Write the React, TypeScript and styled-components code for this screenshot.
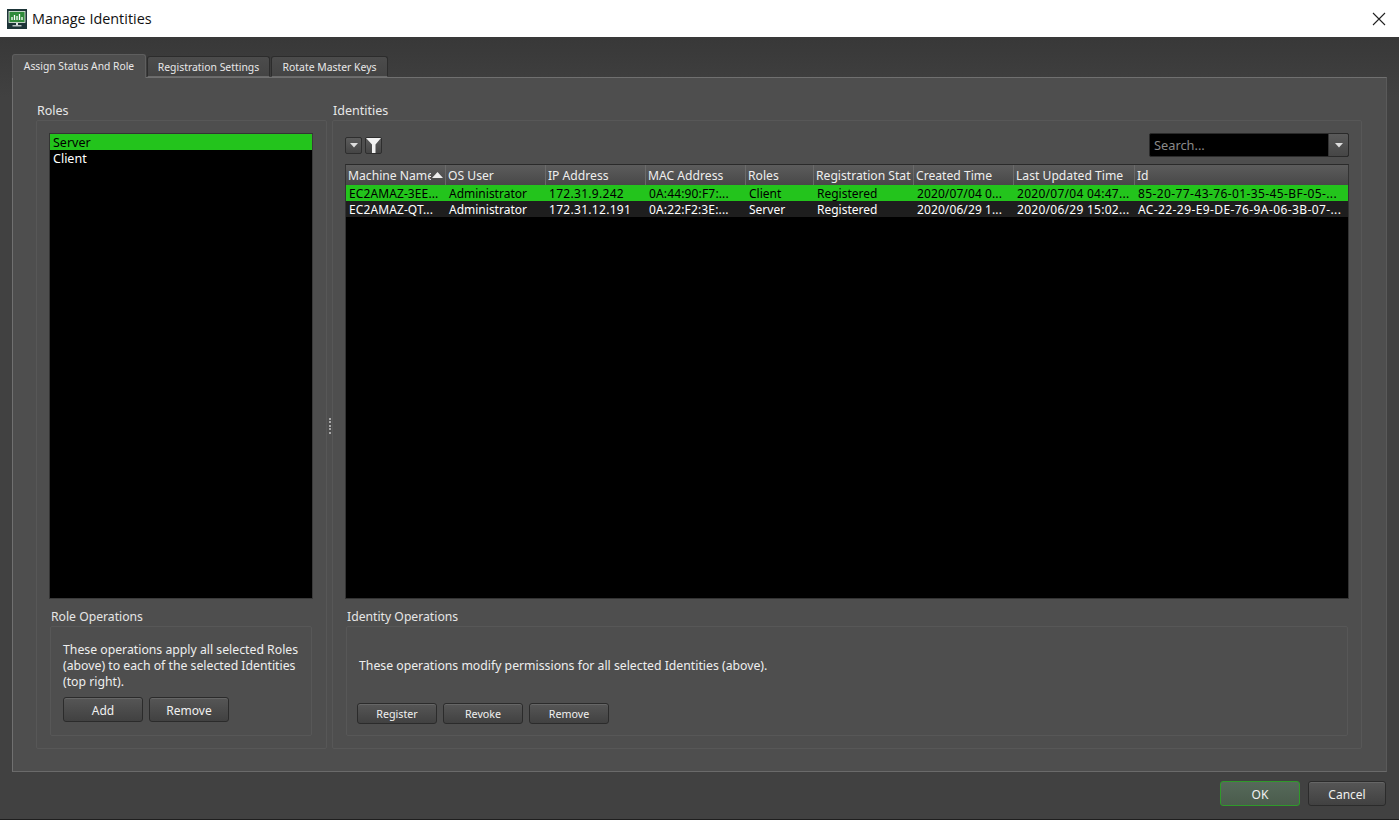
import React from "react";
import styled, { createGlobalStyle } from "styled-components";

const Global = createGlobalStyle`
  html, body { margin: 0; padding: 0; background: #404040; overflow: hidden; }
  * { box-sizing: border-box; }
  body { font-family: "Noto Sans", "Open Sans", sans-serif; font-size: 12.5px; color: #eee; }
`;

const Window = styled.div`
  width: 1399px; height: 820px; display: flex; flex-direction: column;
`;
const TitleBar = styled.header`
  height: 37px; flex: none; background: #fff; display: flex; align-items: center; padding: 0 13px 0 7px; color: #111;
`;
const TitleText = styled.span`
  font-size: 14.4px; margin-left: 5px; flex: 1; font-family: "Open Sans", sans-serif;
`;
const CloseButton = styled.button`
  width: 14px; height: 14px; padding: 0; border: 0; background: none; display: flex;
`;
const Body = styled.div`
  flex: 1; display: flex; flex-direction: column; padding: 17px 12px 0; min-height: 0;
  background: linear-gradient(#383838, #414141 60px, #414141);
  border-bottom: 1px solid #1e1e1e;
`;
const TabRow = styled.div`
  display: flex; align-items: flex-end; height: 23px; flex: none; position: relative; z-index: 1; gap: 1px;
`;
const Tab = styled.div<{ $active?: boolean; $w: number }>`
  width: ${p => p.$w}px;
  height: ${p => (p.$active ? 24 : 21)}px;
  margin-bottom: ${p => (p.$active ? -1 : 0)}px;
  padding-bottom: ${p => (p.$active ? 2 : 0)}px;
  font-size: ${p => (p.$active ? "10.3px" : "10.4px")};
  display: flex; align-items: center; justify-content: center;
  border: 1px solid ${p => (p.$active ? "#5e5e5e" : "#2c2c2c")};
  border-bottom: ${p => (p.$active ? "0" : "1px solid #6a6a6a")};
  border-radius: 3px 3px 0 0;
  background: ${p => (p.$active ? "#4e4e4e" : "linear-gradient(#4c4c4c, #444)")};
  color: #e8e8e8;
`;
const Pane = styled.div`
  width: 1375px; height: 695px; flex: none; background: #4e4e4e;
  border: 1px solid #707070; border-right-color: #5a5a5a; border-bottom-color: #6a6a6a;
  padding: 24px 24px 22px 23px; display: flex;
`;
const LeftColumn = styled.section`
  width: 291px; flex: none; display: flex; flex-direction: column;
`;
const RightColumn = styled.section`
  flex: 1; min-width: 0; display: flex; flex-direction: column;
`;
const Splitter = styled.div`
  width: 5px; flex: none; display: flex; flex-direction: column; align-items: center; justify-content: center; gap: 1.5px;
`;
const SplitDot = styled.i`
  width: 2px; height: 2px; background: #a8a8a8; display: block;
`;
const GroupLabel = styled.div`
  height: 18px; flex: none; line-height: 18px; padding-left: 1px; color: #e6e6e6;
`;
const GroupBox = styled.div<{ $left?: boolean }>`
  flex: 1; min-height: 0; border: 1px solid #575757; border-radius: 2px;
  padding: ${p => (p.$left ? "12px 13px 12px 12px" : "12px")};
  display: flex; flex-direction: column;
`;
const RoleList = styled.div`
  flex: 1; min-height: 0; background: #000; border: 1px solid #333; border-color: #333 #3a3a3a #3a3a3a #333;
`;
const RoleItem = styled.div<{ $selected?: boolean }>`
  height: 16px; line-height: 18px; padding-left: 3px; overflow: hidden;
  background: ${p => (p.$selected ? "#23c41c" : "transparent")};
  color: ${p => (p.$selected ? "#000" : "#fff")};
`;
const SubLabel = styled.div`
  height: 18px; margin-top: 9px; line-height: 18px; padding-left: 2px; flex: none; color: #e6e6e6; font-size: 12.2px;
`;
const SubBox = styled.div<{ $narrow?: boolean }>`
  height: 110px; flex: none; margin: 0 1px; border: 1px solid #575757; border-radius: 2px;
  padding: ${p => (p.$narrow ? "15px 12px 0" : "31px 10px 0")};
  display: flex; flex-direction: column;
`;
const Description = styled.p`
  margin: 0; line-height: 16px; color: #eee; font-size: 12.25px;
`;
const WideDescription = styled(Description)`
  padding-left: 2px; flex: 1;
`;
const ButtonRow = styled.div`
  display: flex; gap: 6px;
`;
const ActionButton = styled.button<{ $small?: boolean; $primary?: boolean; $w?: number }>`
  width: ${p => p.$w ?? 80}px;
  height: ${p => (p.$small ? 21 : 25)}px;
  margin: ${p => (p.$small ? "0 0 11px" : "0")};
  padding: 1px 0 0;
  font-family: inherit;
  font-size: ${p => (p.$small ? "10.7px" : "12px")};
  color: #f0f0f0;
  border-radius: 3px;
  border: 1px solid ${p => (p.$primary ? "#2f9a2a" : "#2b2b2b")};
  background: ${p => (p.$primary ? "linear-gradient(#56695a, #4a5c4c)" : "linear-gradient(#565656, #414141)")};
  box-shadow: inset 0 1px 0 ${p => (p.$primary ? "transparent" : "#666")};
`;
const Spacer = styled.div`
  height: 7px; flex: none;
`;
const Toolbar = styled.div`
  height: 25px; flex: none; display: flex; align-items: flex-start; margin-bottom: 6px;
`;
const IconButton = styled.button`
  width: 17px; height: 17px; margin: 4px 3px 0 0; padding: 0; display: flex; align-items: center; justify-content: center;
  border: 1px solid #2e2e2e; border-radius: 2px; background: linear-gradient(#5c5c5c, #454545);
`;
const SearchCombo = styled.div`
  margin-left: auto; width: 200px; height: 24px; display: flex; border: 1px solid #2a2a2a; border-radius: 2px; background: #000; overflow: hidden;
`;
const SearchInput = styled.div`
  flex: 1; color: #8a8a8a; padding-left: 4px; line-height: 22px; font-size: 12.8px;
`;
const SearchArrow = styled.div`
  width: 20px; display: flex; align-items: center; justify-content: center; background: linear-gradient(#5a5a5a, #464646); border-left: 1px solid #333;
`;
const Table = styled.div`
  flex: 1; min-height: 0; background: #000; border: 1px solid #333; border-top-color: #2a2a2a; overflow: hidden;
`;
const COLUMNS = "100px 100px 100px 100px 68px 100px 100px 121px 1fr";
const HeaderRow = styled.div`
  display: grid; grid-template-columns: ${COLUMNS}; height: 20px;
  background: linear-gradient(#5c5c5c, #484848);
`;
const HeaderCell = styled.div`
  padding: 0 0 0 2px; line-height: 21px; overflow: hidden; white-space: nowrap; position: relative;
  border-right: 1px solid #6a6a6a; color: #eee; font-size: 12.15px;
  &:last-child { border-right: 0; }
`;
const SortedLabel = styled.span`
  display: block; width: 83px; overflow: hidden;
`;
const SortArrow = styled.svg`
  position: absolute; right: 2px; top: 7px;
`;
const DataRow = styled.div<{ $selected?: boolean }>`
  display: grid; grid-template-columns: ${COLUMNS}; height: 16px;
  background: ${p => (p.$selected ? "#23c41c" : "#1e1e1e")};
  color: ${p => (p.$selected ? "#000" : "#fff")};
`;
const DataCell = styled.div<{ $spacing: number }>`
  padding-left: 3px; line-height: 18px; overflow: hidden; white-space: nowrap; font-size: 12px;
  letter-spacing: ${p => p.$spacing}px;
`;
const FooterRow = styled.div`
  display: flex; justify-content: flex-end; gap: 8px; margin-top: 9px; padding-right: 1px;
`;

const heads = ["OS User", "IP Address", "MAC Address", "Roles", "Registration Stat", "Created Time", "Last Updated Time", "Id"];
const cellSpacing = [0.1, 0, 0.3, 0.15, 0, 0, 0.1, 0.27, 0.4];
const rows = [
  ["EC2AMAZ-3EE...", "Administrator", "172.31.9.242", "0A:44:90:F7:...", "Client", "Registered", "2020/07/04 0...", "2020/07/04 04:47...", "85-20-77-43-76-01-35-45-BF-05-..."],
  ["EC2AMAZ-QT...", "Administrator", "172.31.12.191", "0A:22:F2:3E:...", "Server", "Registered", "2020/06/29 1...", "2020/06/29 15:02...", "AC-22-29-E9-DE-76-9A-06-3B-07-..."],
];

const Chevron = () => (
  <svg width="8" height="5" viewBox="0 0 8 5"><path d="M0 0h8L4 4.5z" fill="#dedede" /></svg>
);

const AppIcon = () => (
  <svg width="20" height="20" viewBox="0 0 20 20">
    <rect width="20" height="20" fill="#1d3538" />
    <rect x="2" y="2.5" width="16" height="11" fill="#2f8a3a" stroke="#e8f0e8" strokeWidth="0.8" />
    <path d="M5 11V8M7.5 11V6M10 11V7M12.5 11V5M15 11V8" stroke="#fff" strokeWidth="1.3" />
    <rect x="9" y="14" width="2" height="2.2" fill="#dfe6e6" />
    <rect x="5.5" y="16.2" width="9" height="1.2" fill="#dfe6e6" />
  </svg>
);

export default function App() {
  return (
    <Window>
      <Global />
      <TitleBar>
        <AppIcon />
        <TitleText>Manage Identities</TitleText>
        <CloseButton aria-label="Close">
          <svg width="14" height="14" viewBox="0 0 14 14"><path d="M1 1l12 12M13 1L1 13" stroke="#222" strokeWidth="1.1" /></svg>
        </CloseButton>
      </TitleBar>
      <Body>
        <TabRow>
          <Tab $active $w={134}>Assign Status And Role</Tab>
          <Tab $w={123}>Registration Settings</Tab>
          <Tab $w={117}>Rotate Master Keys</Tab>
        </TabRow>
        <Pane>
          <LeftColumn>
            <GroupLabel>Roles</GroupLabel>
            <GroupBox $left>
              <RoleList>
                <RoleItem $selected>Server</RoleItem>
                <RoleItem>Client</RoleItem>
              </RoleList>
              <SubLabel>Role Operations</SubLabel>
              <SubBox $narrow>
                <Description>
                  These operations apply all selected Roles<br />
                  (above) to each of the selected Identities<br />
                  (top right).
                </Description>
                <Spacer />
                <ButtonRow>
                  <ActionButton>Add</ActionButton>
                  <ActionButton>Remove</ActionButton>
                </ButtonRow>
              </SubBox>
            </GroupBox>
          </LeftColumn>
          <Splitter>
            {[0, 1, 2, 3, 4].map(i => <SplitDot key={i} />)}
          </Splitter>
          <RightColumn>
            <GroupLabel>Identities</GroupLabel>
            <GroupBox>
              <Toolbar>
                <IconButton><Chevron /></IconButton>
                <IconButton>
                  <svg width="15" height="15" viewBox="0 0 15 15"><path d="M0 0h15L9.5 6.5V15H6V6.5z" fill="#f2f2f2" /></svg>
                </IconButton>
                <SearchCombo>
                  <SearchInput>Search...</SearchInput>
                  <SearchArrow><Chevron /></SearchArrow>
                </SearchCombo>
              </Toolbar>
              <Table>
                <HeaderRow>
                  <HeaderCell>
                    <SortedLabel>Machine Name</SortedLabel>
                    <SortArrow width="11" height="6" viewBox="0 0 11 6"><path d="M5.5 0l5.5 6H0z" fill="#eee" /></SortArrow>
                  </HeaderCell>
                  {heads.map(h => <HeaderCell key={h}>{h}</HeaderCell>)}
                </HeaderRow>
                {rows.map((r, i) => (
                  <DataRow key={r[0]} $selected={i === 0}>
                    {r.map((c, j) => <DataCell key={j} $spacing={cellSpacing[j]}>{c}</DataCell>)}
                  </DataRow>
                ))}
              </Table>
              <SubLabel>Identity Operations</SubLabel>
              <SubBox>
                <WideDescription>These operations modify permissions for all selected Identities (above).</WideDescription>
                <ButtonRow>
                  <ActionButton $small>Register</ActionButton>
                  <ActionButton $small>Revoke</ActionButton>
                  <ActionButton $small>Remove</ActionButton>
                </ButtonRow>
              </SubBox>
            </GroupBox>
          </RightColumn>
        </Pane>
        <FooterRow>
          <ActionButton $primary>OK</ActionButton>
          <ActionButton $w={78}>Cancel</ActionButton>
        </FooterRow>
      </Body>
    </Window>
  );
}
